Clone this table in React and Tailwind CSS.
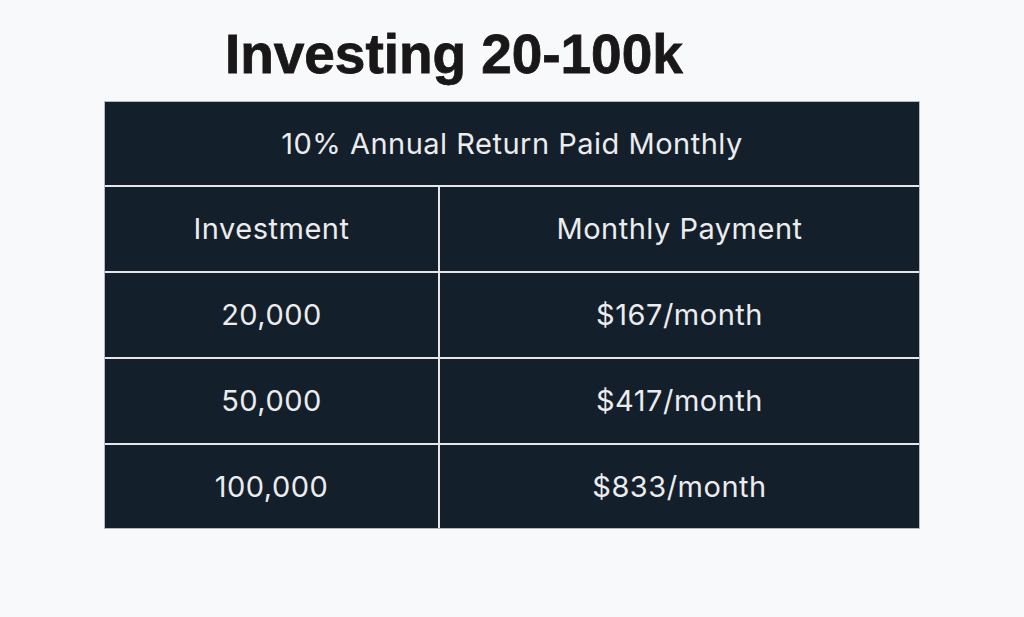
import React from 'react';

const rows = [
  ['20,000', '$167/month', 'h-[86px] border-b-2'],
  ['50,000', '$417/month', 'h-[86px] border-b-2'],
  ['100,000', '$833/month', 'h-[83px]'],
];

export default function App() {
  return (
    <div className="min-h-screen w-full bg-[#f8f9fb] pt-[27px]">
      <h1 className="ml-[225px] text-[55px] leading-none font-bold tracking-[-0.05px] text-[#1a1718] [-webkit-text-stroke:0.8px_#1a1718] [font-family:'Liberation_Sans',Arial,sans-serif]">
        Investing 20-100k
      </h1>

      <div className="mt-[19px] ml-[104px] w-[816px] border border-[#b9b9b9] bg-[#141f2c] text-[29px] tracking-[0.5px] text-[#ececec] [font-family:Inter,sans-serif]">
        <div className="h-[85px] flex items-center justify-center border-b-2 border-[#e6e6e6]">
          10% Annual Return Paid Monthly
        </div>
        <div className="grid grid-cols-[335px_1fr]">
          <div className="h-[86px] flex items-center justify-center border-r-2 border-b-2 border-[#e6e6e6]">Investment</div>
          <div className="h-[86px] flex items-center justify-center border-b-2 border-[#e6e6e6]">Monthly Payment</div>
          {rows.map(([inv, pay, cls]) => (
            <React.Fragment key={inv}>
              <div className={`${cls} flex items-center justify-center border-r-2 border-[#e6e6e6]`}>{inv}</div>
              <div className={`${cls} flex items-center justify-center border-[#e6e6e6]`}>{pay}</div>
            </React.Fragment>
          ))}
        </div>
      </div>
    </div>
  );
}
